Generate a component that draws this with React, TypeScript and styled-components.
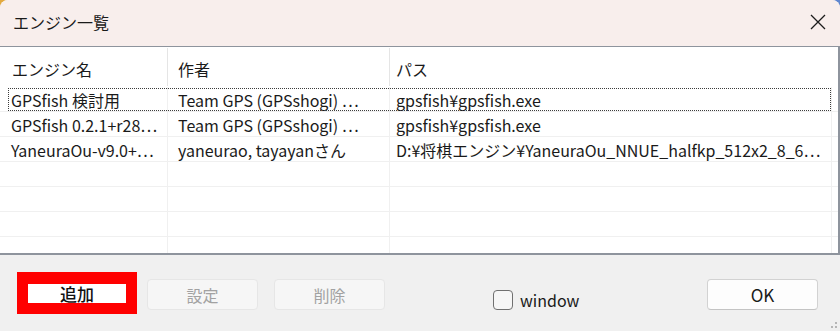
import styled, { createGlobalStyle } from "styled-components";

const GlobalStyle = createGlobalStyle`
  html, body {
    margin: 0;
    padding: 0;
  }
  body {
    width: 840px;
    height: 331px;
    overflow: hidden;
    background: linear-gradient(to right, #e3a93f 0 50%, #5f86cf 50% 100%);
    font-family: "Noto Sans CJK JP", "Noto Sans", sans-serif;
  }
`;

const FONT = `"Noto Sans CJK JP", "Noto Sans", sans-serif`;

type Engine = { name: string; author: string; path: string };

const engines: Engine[] = [
  { name: "GPSfish 検討用", author: "Team GPS (GPSshogi) …", path: "gpsfish¥gpsfish.exe" },
  { name: "GPSfish 0.2.1+r28…", author: "Team GPS (GPSshogi) …", path: "gpsfish¥gpsfish.exe" },
  {
    name: "YaneuraOu-v9.0+…",
    author: "yaneurao, tayayanさん",
    path: "D:¥将棋エンジン¥YaneuraOu_NNUE_halfkp_512x2_8_6…",
  },
  { name: "", author: "", path: "" },
  { name: "", author: "", path: "" },
  { name: "", author: "", path: "" },
  { name: "", author: "", path: "" },
];

const App = () => {
  return (
    <>
      <GlobalStyle />
      <Window>
        <TitleBar>
          <Title>エンジン一覧</Title>
          <CloseButton aria-label="close">
            <svg width="16" height="16" viewBox="0 0 16 16">
              <path d="M1 1 L15 15 M15 1 L1 15" stroke="#1c1c1c" strokeWidth="1.3" fill="none" />
            </svg>
          </CloseButton>
        </TitleBar>

        <ListView>
          <HeaderRow>
            <HeaderCell>エンジン名</HeaderCell>
            <HeaderCell>作者</HeaderCell>
            <HeaderCell $last>パス</HeaderCell>
          </HeaderRow>
          <Rows>
            {engines.map((e, idx) => (
              <Row key={idx} $focused={idx === 0}>
                <Cell $first>{e.name}</Cell>
                <Cell>{e.author}</Cell>
                <Cell>{e.path}</Cell>
                <Filler />
              </Row>
            ))}
          </Rows>
        </ListView>

        <Footer>
          <Highlight>
            <PrimaryButton>追加</PrimaryButton>
          </Highlight>
          <DisabledButton disabled $gap={10}>
            設定
          </DisabledButton>
          <DisabledButton disabled $gap={16}>
            削除
          </DisabledButton>
          <CheckLabel>
            <CheckBox />
            window
          </CheckLabel>
          <OkButton>OK</OkButton>
          <Grip>
            <svg width="8" height="10" viewBox="0 0 8 10">
              <circle cx="6" cy="2" r="0.9" fill="#9a9a9a" />
              <circle cx="6" cy="6" r="0.9" fill="#9a9a9a" />
              <circle cx="2" cy="6" r="0.9" fill="#9a9a9a" />
            </svg>
          </Grip>
        </Footer>
      </Window>
    </>
  );
};

export default App;

const Window = styled.div`
  display: flex;
  flex-direction: column;
  width: 840px;
  height: 331px;
  border-radius: 8px 8px 0 0;
  overflow: hidden;
  background-color: #f0f0f0;
`;

const TitleBar = styled.div`
  display: flex;
  align-items: center;
  justify-content: space-between;
  height: 46px;
  padding: 0 14px 2px 13px;
  box-sizing: border-box;
  background-color: #f8eeec;
`;

const Title = styled.h1`
  margin: 0;
  font-family: ${FONT};
  font-size: 16px;
  font-weight: 400;
  color: #1a1a1a;
`;

const CloseButton = styled.button`
  display: flex;
  align-items: center;
  justify-content: center;
  padding: 0;
  border: none;
  background: transparent;
`;

const ListView = styled.div`
  display: flex;
  flex-direction: column;
  height: 209px;
  box-sizing: border-box;
  border-top: 1px solid #8e949d;
  border-right: 2px solid #8e949d;
  border-bottom: 2px solid #8e949d;
  background-color: #ffffff;
`;

const columns = "168px 222px 442px 1fr";

const HeaderRow = styled.div`
  display: grid;
  grid-template-columns: ${columns};
  height: 40px;
  flex-shrink: 0;
`;

const HeaderCell = styled.div<{ $last?: boolean }>`
  display: flex;
  align-items: center;
  padding: 4px 0 0 ${({ $last }) => ($last ? "6px" : "10px")};
  margin: 1px 0;
  border-right: 1px solid #e5e5e5;
  font-family: ${FONT};
  font-size: 16px;
  color: #1a1a1a;
  &:first-child {
    padding-left: 12px;
  }
  ${({ $last }) => $last && "border-right: none;"}
`;

const Rows = styled.div`
  flex: 1;
  overflow: hidden;
`;

const Row = styled.div<{ $focused?: boolean }>`
  position: relative;
  display: grid;
  grid-template-columns: ${columns};
  height: 25px;
  box-sizing: border-box;
  border-bottom: 1px solid #f0f0f0;
  ${({ $focused }) =>
    $focused &&
    `
    &::after {
      content: "";
      position: absolute;
      left: 8px;
      right: 7px;
      top: 1px;
      bottom: 0;
      border: 1px dotted #3c3c3c;
      pointer-events: none;
    }
  `}
`;

const Cell = styled.div<{ $first?: boolean }>`
  display: flex;
  align-items: center;
  min-width: 0;
  padding: 1px 4px 0 ${({ $first }) => ($first ? "11px" : "10px")};
  border-right: 1px solid #f0f0f0;
  font-family: ${FONT};
  font-size: 16px;
  color: #1a1a1a;
  white-space: nowrap;
  overflow: hidden;
  text-overflow: ellipsis;
  &:nth-child(3) {
    padding-left: 6px;
  }
`;

const Filler = styled.div``;

const Footer = styled.div`
  position: relative;
  flex: 1;
  display: flex;
  align-items: center;
  padding: 0 0 1px 17px;
`;

const Highlight = styled.div`
  display: flex;
  padding: 12px 11px 11px;
  background-color: #ff0000;
`;

const PrimaryButton = styled.button`
  width: 98px;
  height: 19px;
  padding: 0;
  border: none;
  background-color: #ffffff;
  font-family: ${FONT};
  font-size: 17px;
  font-weight: 500;
  line-height: 19px;
  color: #111111;
`;

const DisabledButton = styled.button<{ $gap: number }>`
  width: 111px;
  height: 31px;
  margin-left: ${({ $gap }) => $gap}px;
  margin-top: 4px;
  border: 1px solid #e6e6e6;
  border-radius: 4px;
  background-color: #f6f6f6;
  font-family: ${FONT};
  font-size: 16px;
  color: #a2a2a2;
`;

const CheckLabel = styled.label`
  display: flex;
  align-items: center;
  gap: 7px;
  margin-left: 108px;
  margin-top: 14px;
  font-family: ${FONT};
  font-size: 16px;
  color: #1a1a1a;
`;

const CheckBox = styled.span`
  width: 20px;
  height: 20px;
  box-sizing: border-box;
  border: 1.5px solid #707070;
  border-radius: 4px;
  background-color: #f6f6f6;
`;

const OkButton = styled.button`
  width: 111px;
  height: 31px;
  margin-left: auto;
  margin-right: 22px;
  margin-top: 4px;
  border: 1px solid #d2d2d2;
  border-bottom-color: #c4c4c4;
  border-radius: 4px;
  background-color: #fdfdfd;
  font-family: ${FONT};
  font-size: 17px;
  color: #1a1a1a;
`;

const Grip = styled.div`
  position: absolute;
  right: 2px;
  bottom: 0;
  display: flex;
`;
